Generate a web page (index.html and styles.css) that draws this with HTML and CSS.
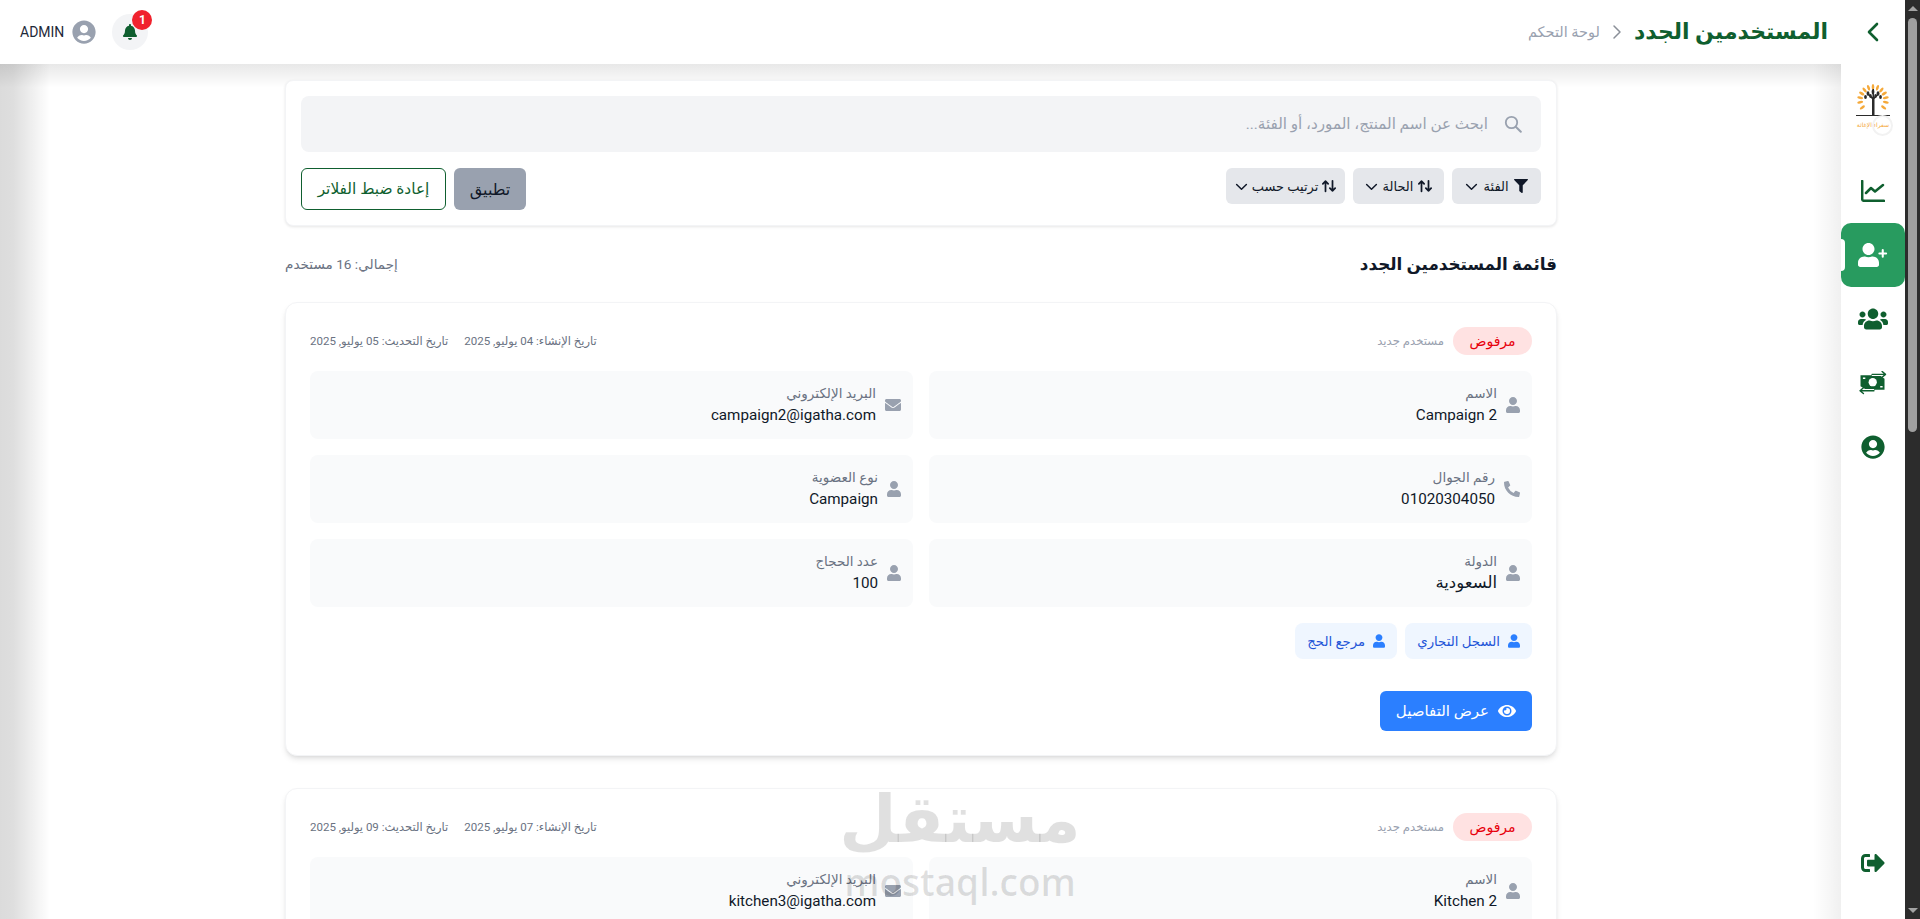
FILE: index.html
```html
<!DOCTYPE html>
<html lang="ar" dir="rtl">
<head>
  <meta charset="UTF-8">
  <meta name="viewport" content="width=device-width, initial-scale=1.0">
  <title>المستخدمين الجدد</title>
  <link rel="stylesheet" href="styles.css">
</head>
<body>
  <!-- Icon sprite -->
  <svg class="sprite" xmlns="http://www.w3.org/2000/svg">
    <symbol id="i-user" viewBox="0 0 448 512"><path d="M224 256c70.7 0 128-57.3 128-128S294.7 0 224 0 96 57.3 96 128s57.3 128 128 128zm89.6 32h-16.7c-22.2 10.2-46.9 16-72.9 16s-50.6-5.8-72.9-16h-16.7C60.2 288 0 348.2 0 422.4V464c0 26.5 21.5 48 48 48h352c26.5 0 48-21.5 48-48v-41.6c0-74.2-60.2-134.4-134.4-134.4z"/></symbol>
    <symbol id="i-phone" viewBox="0 0 512 512"><path d="M497.39 361.8l-112-48a24 24 0 0 0-28 6.9l-49.6 60.6A370.66 370.66 0 0 1 130.6 204.11l60.6-49.6a23.94 23.94 0 0 0 6.9-28l-48-112A24.16 24.16 0 0 0 122.6.61l-104 24A24 24 0 0 0 0 48c0 256.5 207.9 464 464 464a24 24 0 0 0 23.4-18.6l24-104a24.29 24.29 0 0 0-14.01-27.6z"/></symbol>
    <symbol id="i-mail" viewBox="0 0 512 512"><path d="M502.3 190.8c3.9-3.1 9.7-.2 9.7 4.7V400c0 26.5-21.5 48-48 48H48c-26.5 0-48-21.5-48-48V195.6c0-5 5.7-7.8 9.7-4.7 22.4 17.4 52.1 39.5 154.1 113.6 21.1 15.4 56.7 47.8 92.2 47.6 35.7.3 72-32.8 92.3-47.6 102-74.1 131.6-96.3 154-113.7zM256 320c23.2.4 56.6-29.2 73.4-41.4 132.7-96.3 142.8-104.7 173.4-128.7 5.8-4.5 9.2-11.5 9.2-18.9v-19c0-26.5-21.5-48-48-48H48C21.5 64 0 85.5 0 112v19c0 7.4 3.4 14.3 9.2 18.9 30.6 23.9 40.7 32.4 173.4 128.7 16.8 12.2 50.2 41.8 73.4 41.4z"/></symbol>
    <symbol id="i-filter" viewBox="0 0 512 512"><path d="M487.976 0H24.028C2.71 0-8.047 25.866 7.058 40.971L192 225.941V432c0 7.831 3.821 15.17 10.237 19.662l80 55.98C298.02 518.69 320 507.493 320 487.98V225.941l184.947-184.97C520.021 25.896 509.338 0 487.976 0z"/></symbol>
    <symbol id="i-bell" viewBox="0 0 448 512"><path d="M224 512c35.32 0 63.97-28.65 63.97-64H160.03c0 35.35 28.65 64 63.97 64zm215.39-149.71c-19.32-20.76-55.47-51.99-55.47-154.29 0-77.7-54.48-139.9-127.94-155.16V32c0-17.67-14.32-32-31.98-32s-31.98 14.33-31.98 32v20.84C118.56 68.1 64.08 130.3 64.08 208c0 102.3-36.15 133.53-55.47 154.29-6 6.45-8.66 14.16-8.61 21.71.11 16.4 12.98 32 32.1 32h383.8c19.12 0 32-15.6 32.1-32 .05-7.55-2.61-15.27-8.61-21.71z"/></symbol>
    <symbol id="i-user-circle" viewBox="0 0 496 512"><path d="M248 8C111 8 0 119 0 256s111 248 248 248 248-111 248-248S385 8 248 8zm0 96c48.6 0 88 39.4 88 88s-39.4 88-88 88-88-39.4-88-88 39.4-88 88-88zm0 344c-58.7 0-111.3-26.6-146.5-68.2 18.8-35.4 55.6-59.8 98.5-59.8 2.4 0 4.8.4 7.1 1.1 13 4.2 26.6 6.9 40.9 6.9 14.3 0 28-2.7 40.9-6.9 2.3-.7 4.7-1.1 7.1-1.1 42.9 0 79.7 24.4 98.5 59.8C359.3 421.4 306.7 448 248 448z"/></symbol>
    <symbol id="i-users" viewBox="0 0 640 512"><path d="M96 224c35.3 0 64-28.7 64-64s-28.7-64-64-64-64 28.7-64 64 28.7 64 64 64zm448 0c35.3 0 64-28.7 64-64s-28.7-64-64-64-64 28.7-64 64 28.7 64 64 64zm32 32h-64c-17.6 0-33.5 7.1-45.1 18.6 40.3 22.1 68.9 62 75.1 109.4h66c17.7 0 32-14.3 32-32v-32c0-35.3-28.7-64-64-64zm-256 0c61.9 0 112-50.1 112-112S381.9 32 320 32 208 82.1 208 144s50.1 112 112 112zm76.8 32h-8.3c-20.8 10-43.9 16-68.5 16s-47.6-6-68.5-16h-8.3C179.6 288 128 339.6 128 403.2V432c0 26.5 21.5 48 48 48h288c26.5 0 48-21.5 48-48v-28.8c0-63.6-51.6-115.2-115.2-115.2zm-223.7-13.4C161.5 263.1 145.6 256 128 256H64c-35.3 0-64 28.7-64 64v32c0 17.7 14.3 32 32 32h65.9c6.3-47.4 34.9-87.3 75.2-109.4z"/></symbol>
    <symbol id="i-signout" viewBox="0 0 512 512"><path d="M497 273L329 441c-15 15-41 4.5-41-17v-96H152c-13.3 0-24-10.7-24-24v-96c0-13.3 10.7-24 24-24h136V88c0-21.4 25.9-32 41-17l168 168c9.3 9.4 9.3 24.6 0 34zM192 436v-40c0-6.6-5.4-12-12-12H96c-17.7 0-32-14.3-32-32V160c0-17.7 14.3-32 32-32h84c6.6 0 12-5.4 12-12V76c0-6.6-5.4-12-12-12H96c-53 0-96 43-96 96v192c0 53 43 96 96 96h84c6.6 0 12-5.4 12-12z"/></symbol>
    <symbol id="i-eye" viewBox="0 0 576 512"><path d="M572.52 241.4C518.29 135.59 410.93 64 288 64S57.68 135.64 3.48 241.41a32.35 32.35 0 0 0 0 29.19C57.71 376.41 165.07 448 288 448s230.32-71.64 284.52-177.41a32.35 32.35 0 0 0 0-29.19zM288 400a144 144 0 1 1 144-144 143.93 143.93 0 0 1-144 144zm0-240a95.31 95.31 0 0 0-25.31 3.79 47.85 47.85 0 0 1-66.9 66.9A95.78 95.78 0 1 0 288 160z"/></symbol>
    <symbol id="i-sort" viewBox="0 0 16 16"><path d="M4 14V2.500M1 5.500l3-3 3 3M12 2v11.500M9 10.500l3 3 3-3" fill="none" stroke="currentColor" stroke-width="2" stroke-linecap="round" stroke-linejoin="round"/></symbol>
    <symbol id="i-down" viewBox="0 0 16 16"><path d="M2 5.500l6 6 6-6" fill="none" stroke="currentColor" stroke-width="1.800" stroke-linecap="round" stroke-linejoin="round"/></symbol>
  </svg>

  <!-- Browser scrollbar -->
  <div class="scrollbar">
    <span class="scroll-up"></span>
    <div class="scroll-track"><span class="scroll-thumb"></span></div>
    <span class="scroll-down"></span>
  </div>

  <!-- Sidebar -->
  <aside class="sidebar">
    <div class="side-top">
      <svg class="side-chevron" viewBox="0 0 14 20"><path d="M11 2L3 10l8 8" fill="none" stroke="currentColor" stroke-width="2.600" stroke-linecap="round" stroke-linejoin="round"/></svg>
    </div>
    <div class="side-logo">
      <svg class="logo-mark" viewBox="0 0 36 36">
        <g fill="#f5a93a">
          <ellipse cx="18" cy="3" rx="1.300" ry="3"/>
          <ellipse cx="18" cy="3" rx="1.300" ry="3" transform="rotate(20 18 16)"/>
          <ellipse cx="18" cy="3" rx="1.300" ry="3" transform="rotate(40 18 16)"/>
          <ellipse cx="18" cy="3" rx="1.300" ry="3" transform="rotate(60 18 16)"/>
          <ellipse cx="18" cy="3" rx="1.300" ry="3" transform="rotate(80 18 16)"/>
          <ellipse cx="18" cy="3" rx="1.300" ry="3" transform="rotate(100 18 16)"/>
          <ellipse cx="18" cy="3" rx="1.300" ry="3" transform="rotate(125 18 16)"/>
          <ellipse cx="18" cy="3" rx="1.300" ry="3" transform="rotate(-20 18 16)"/>
          <ellipse cx="18" cy="3" rx="1.300" ry="3" transform="rotate(-40 18 16)"/>
          <ellipse cx="18" cy="3" rx="1.300" ry="3" transform="rotate(-60 18 16)"/>
          <ellipse cx="18" cy="3" rx="1.300" ry="3" transform="rotate(-80 18 16)"/>
          <ellipse cx="18" cy="3" rx="1.300" ry="3" transform="rotate(-100 18 16)"/>
          <ellipse cx="18" cy="3" rx="1.300" ry="3" transform="rotate(-125 18 16)"/>
        </g>
        <g fill="#2b2b2b">
          <path d="M17 36V20l-5-5 1-1 4.500 4V10h1.500v8l4.500-4 1 1-5 5v16z" transform="translate(0 -5)"/>
          <ellipse cx="13" cy="9.500" rx="1.400" ry="2.200"/>
          <ellipse cx="18" cy="8" rx="1.400" ry="2.400"/>
          <ellipse cx="23" cy="9.500" rx="1.400" ry="2.200"/>
          <ellipse cx="10.500" cy="13" rx="1.400" ry="2"/>
          <ellipse cx="25.500" cy="13" rx="1.400" ry="2"/>
          <ellipse cx="15.500" cy="12" rx="1.300" ry="2"/>
          <ellipse cx="20.500" cy="12" rx="1.300" ry="2"/>
          <rect x="1" y="31" width="34" height="1"/>
        </g>
      </svg>
      <span class="logo-text">سفراء الإغاثة</span>
      <span class="logo-ring"></span>
    </div>
    <nav class="side-nav">
      <a class="side-item">
        <svg class="side-icon chart" viewBox="0 0 24 22"><path d="M1.200 1v18a1.800 1.800 0 0 0 1.800 1.800h20M5 13l5-5 4 3.500L22 5" fill="none" stroke="currentColor" stroke-width="2.500" stroke-linecap="round" stroke-linejoin="round"/></svg>
      </a>
      <a class="side-item active">
        <svg class="side-icon wide" viewBox="0 0 640 512">
          <path d="M224 256c70.7 0 128-57.3 128-128S294.7 0 224 0 96 57.3 96 128s57.3 128 128 128zm89.6 32h-16.7c-22.2 10.2-46.9 16-72.9 16s-50.6-5.800-72.900-16h-16.700C60.200 288 0 348.200 0 422.400V464c0 26.500 21.500 48 48 48h352c26.500 0 48-21.500 48-48v-41.600c0-74.200-60.200-134.400-134.400-134.400z"/>
          <path d="M528 150v144M456 222h144" fill="none" stroke="currentColor" stroke-width="44" stroke-linecap="round"/>
        </svg>
      </a>
      <a class="side-item">
        <svg class="side-icon wide"><use href="#i-users"/></svg>
      </a>
      <a class="side-item">
        <svg class="side-icon wide" viewBox="8 11 30 25">
          <path d="M10 15.500h20l5 3.500v11.500H16L10 27z" fill="currentColor"/>
          <circle cx="22.700" cy="22.700" r="4.300" fill="#fff"/>
          <path d="M12.500 18.500h2.500M33 27.500h-2.500" stroke="#fff" stroke-width="1.500"/>
          <path d="M22 14.500h14M24 31.500H9" fill="none" stroke="#fff" stroke-width="3.500"/>
          <path d="M22 14.500h14M32.500 11.500l3.500 3-3.500 3M24 31.500H9.500M13 28.500l-3.500 3 3.500 3" fill="none" stroke="currentColor" stroke-width="1.500" stroke-linecap="round" stroke-linejoin="round"/>
        </svg>
      </a>
      <a class="side-item">
        <svg class="side-icon"><use href="#i-user-circle"/></svg>
      </a>
    </nav>
    <a class="side-item side-bottom">
      <svg class="side-icon"><use href="#i-signout"/></svg>
    </a>
  </aside>

  <div class="main">
    <!-- Top bar -->
    <header class="topbar">
      <div class="crumbs">
        <h1>المستخدمين الجدد</h1>
        <svg class="crumb-sep" viewBox="0 0 10 16"><path d="M2 2l6 6-6 6" fill="none" stroke="currentColor" stroke-width="1.500" stroke-linecap="round" stroke-linejoin="round"/></svg>
        <span class="crumb-link">لوحة التحكم</span>
      </div>
      <div class="top-actions">
        <div class="bell">
          <svg class="bell-icon"><use href="#i-bell"/></svg>
          <span class="bell-count">1</span>
        </div>
        <svg class="avatar"><use href="#i-user-circle"/></svg>
        <span class="admin-name">ADMIN</span>
      </div>
    </header>

    <main class="content">
      <!-- Filters -->
      <section class="filter-card">
        <div class="search-box">
          <svg class="search-icon" viewBox="0 0 18 18"><circle cx="7.500" cy="7.500" r="5.700" fill="none" stroke="currentColor" stroke-width="1.800"/><path d="M12 12l4.800 4.800" stroke="currentColor" stroke-width="2" stroke-linecap="round"/></svg>
          <span class="search-placeholder">ابحث عن اسم المنتج، المورد، أو الفئة...</span>
        </div>
        <div class="filter-row">
          <div class="filter-group">
            <button class="filter-btn fb-category"><svg class="fb-icon"><use href="#i-filter"/></svg>الفئة<svg class="fb-down"><use href="#i-down"/></svg></button>
            <button class="filter-btn fb-status"><svg class="fb-icon"><use href="#i-sort"/></svg>الحالة<svg class="fb-down"><use href="#i-down"/></svg></button>
            <button class="filter-btn fb-sort"><svg class="fb-icon"><use href="#i-sort"/></svg>ترتيب حسب<svg class="fb-down"><use href="#i-down"/></svg></button>
          </div>
          <div class="filter-group">
            <button class="apply-btn">تطبيق</button>
            <button class="reset-btn">إعادة ضبط الفلاتر</button>
          </div>
        </div>
      </section>

      <div class="list-head">
        <h2>قائمة المستخدمين الجدد</h2>
        <span class="list-total">إجمالي: 16 مستخدم</span>
      </div>

      <!-- User 1 -->
      <article class="user-card">
        <div class="user-top">
          <div class="user-state">
            <span class="badge-rejected">مرفوض</span>
            <span class="user-type">مستخدم جديد</span>
          </div>
          <div class="user-dates">
            <span>تاريخ الإنشاء: 04 يوليو, 2025</span>
            <span>تاريخ التحديث: 05 يوليو, 2025</span>
          </div>
        </div>
        <div class="field-grid">
          <div class="field"><svg class="field-icon person"><use href="#i-user"/></svg><div><div class="field-label">الاسم</div><div class="field-value">Campaign 2</div></div></div>
          <div class="field"><svg class="field-icon"><use href="#i-mail"/></svg><div><div class="field-label">البريد الإلكتروني</div><div class="field-value">campaign2@igatha.com</div></div></div>
          <div class="field"><svg class="field-icon"><use href="#i-phone"/></svg><div><div class="field-label">رقم الجوال</div><div class="field-value">01020304050</div></div></div>
          <div class="field"><svg class="field-icon person"><use href="#i-user"/></svg><div><div class="field-label">نوع العضوية</div><div class="field-value">Campaign</div></div></div>
          <div class="field"><svg class="field-icon person"><use href="#i-user"/></svg><div><div class="field-label">الدولة</div><div class="field-value value-ar">السعودية</div></div></div>
          <div class="field"><svg class="field-icon person"><use href="#i-user"/></svg><div><div class="field-label">عدد الحجاج</div><div class="field-value">100</div></div></div>
        </div>
        <div class="doc-row">
          <span class="doc-chip"><svg class="chip-icon"><use href="#i-user"/></svg>السجل التجاري</span>
          <span class="doc-chip"><svg class="chip-icon"><use href="#i-user"/></svg>مرجع الحج</span>
        </div>
        <button class="details-btn"><svg class="eye-icon"><use href="#i-eye"/></svg>عرض التفاصيل</button>
      </article>

      <!-- User 2 -->
      <article class="user-card">
        <div class="user-top">
          <div class="user-state">
            <span class="badge-rejected">مرفوض</span>
            <span class="user-type">مستخدم جديد</span>
          </div>
          <div class="user-dates">
            <span>تاريخ الإنشاء: 07 يوليو, 2025</span>
            <span>تاريخ التحديث: 09 يوليو, 2025</span>
          </div>
        </div>
        <div class="field-grid">
          <div class="field"><svg class="field-icon person"><use href="#i-user"/></svg><div><div class="field-label">الاسم</div><div class="field-value">Kitchen 2</div></div></div>
          <div class="field"><svg class="field-icon"><use href="#i-mail"/></svg><div><div class="field-label">البريد الإلكتروني</div><div class="field-value">kitchen3@igatha.com</div></div></div>
        </div>
      </article>
    </main>
  </div>

  <!-- Site watermark baked into the screenshot -->
  <div class="watermark">
    <span class="wm-ar">مستقل</span>
    <span class="wm-en">mostaql.com</span>
  </div>
</body>
</html>
```

FILE: styles.css
```css
* {
  margin: 0;
  padding: 0;
  box-sizing: border-box;
}

html, body {
  height: 100%;
  overflow: hidden;
}

body {
  display: flex;
  font-family: Roboto, "DejaVu Sans", sans-serif;
  color: #101828;
  background: #fff;
}

svg {
  display: block;
  fill: currentColor;
  flex-shrink: 0;
}

button {
  font: inherit;
  border: none;
  cursor: pointer;
}

.sprite {
  display: none;
}

/* Scrollbar */
.scrollbar {
  width: 15px;
  flex-shrink: 0;
  display: flex;
  flex-direction: column;
  align-items: center;
  background: #2c2c2c;
}

.scroll-up,
.scroll-down {
  width: 0;
  height: 0;
  border-left: 5px solid transparent;
  border-right: 5px solid transparent;
}

.scroll-up {
  margin: 6px 0 2px;
  border-bottom: 5px solid #a3a3a3;
}

.scroll-down {
  margin: 2px 0 6px;
  border-top: 5px solid #a3a3a3;
}

.scroll-track {
  flex: 1;
  width: 100%;
  padding: 5px 3px 0;
}

.scroll-thumb {
  display: block;
  height: 414px;
  background: #9f9f9f;
  border-radius: 5px;
}

/* Sidebar */
.sidebar {
  width: 64px;
  flex-shrink: 0;
  display: flex;
  flex-direction: column;
  background: #fff;
  color: #0f5f2f;
}

.side-top {
  height: 64px;
  display: flex;
  align-items: center;
  justify-content: center;
}

.side-chevron {
  width: 14px;
  height: 20px;
}

.side-logo {
  position: relative;
  height: 95px;
  padding-top: 20px;
  display: flex;
  flex-direction: column;
  align-items: center;
}

.logo-mark {
  width: 36px;
  height: 36px;
}

.logo-text {
  font-size: 6px;
  line-height: 9px;
  color: #f5a93a;
  white-space: nowrap;
}

.logo-ring {
  position: absolute;
  top: 51px;
  left: 31px;
  width: 21px;
  height: 21px;
  border: 2px solid #f2f2f2;
  border-radius: 50%;
}

.side-nav {
  flex: 1;
}

.side-item {
  position: relative;
  display: flex;
  align-items: center;
  justify-content: center;
  height: 64px;
}

.side-item.active {
  background: #289b5f;
  color: #fff;
  border-radius: 10px;
}

.side-item.active::before {
  content: "";
  position: absolute;
  left: 0;
  top: 16px;
  width: 4px;
  height: 32px;
  background: #fff;
  border-radius: 0 6px 6px 0;
}

.side-bottom {
  height: 56px;
  margin-bottom: 28px;
}

.side-icon {
  width: 24px;
  height: 24px;
}

.side-icon.wide {
  width: 30px;
}

.side-icon.chart {
  height: 22px;
}

/* Top bar */
.main {
  flex: 1;
  min-width: 0;
  display: flex;
  flex-direction: column;
}

.topbar {
  height: 64px;
  flex-shrink: 0;
  display: flex;
  align-items: center;
  justify-content: space-between;
  padding: 0 13px 0 20px;
  background: #fff;
}

.crumbs {
  display: flex;
  align-items: center;
  gap: 12px;
}

.crumbs h1 {
  font-size: 22px;
  line-height: 32px;
  font-weight: 600;
  color: #0f5f2f;
}

.crumb-sep {
  width: 10px;
  height: 16px;
  color: #8a8f98;
}

.crumb-link {
  font-size: 14.500px;
  color: #99a1af;
}

.top-actions {
  display: flex;
  align-items: center;
}

.bell {
  position: relative;
  width: 36px;
  height: 36px;
  margin-left: 16px;
  display: flex;
  align-items: center;
  justify-content: center;
  background: #f3f4f6;
  border-radius: 50%;
  color: #0f5f2f;
}

.bell-icon {
  width: 14px;
  height: 16px;
}

.bell-count {
  position: absolute;
  top: -4px;
  right: -4px;
  width: 20px;
  height: 20px;
  display: flex;
  align-items: center;
  justify-content: center;
  background: #f0222d;
  border-radius: 50%;
  color: #fff;
  font-size: 12px;
  font-weight: 700;
}

.avatar {
  width: 24px;
  height: 24px;
  margin-left: 8px;
  color: #99a1af;
}

.admin-name {
  font-size: 14px;
  color: #1e2939;
}

/* Content */
.content {
  flex: 1;
  min-height: 0;
  overflow: hidden;
  padding: 16px 284px 0 285px;
  background:
    linear-gradient(to right, rgba(0, 0, 0, 0.14), rgba(0, 0, 0, 0.13) 13px, transparent 50px),
    linear-gradient(to left, rgba(0, 0, 0, 0.06), transparent 28px),
    linear-gradient(to bottom, rgba(0, 0, 0, 0.09), transparent 24px);
}

.filter-card {
  background: #fff;
  border: 1px solid #f3f4f6;
  border-radius: 8px;
  padding: 15px;
  box-shadow: 0 1px 3px rgba(0, 0, 0, 0.1);
}

.search-box {
  height: 56px;
  display: flex;
  align-items: center;
  gap: 16px;
  padding: 0 19px;
  background: #f3f4f6;
  border-radius: 8px;
}

.search-icon {
  width: 18px;
  height: 18px;
  color: #99a1af;
}

.search-placeholder {
  font-size: 15.200px;
  color: #99a1af;
}

.filter-row {
  display: flex;
  justify-content: space-between;
  align-items: flex-start;
  margin-top: 16px;
}

.filter-group {
  display: flex;
  gap: 8px;
}

.filter-btn {
  height: 36px;
  display: flex;
  align-items: center;
  justify-content: center;
  gap: 5px;
  background: #e5e7eb;
  border-radius: 6px;
  font-size: 13px;
  color: #101828;
}

.fb-category {
  width: 89px;
}

.fb-status {
  width: 91px;
}

.fb-sort {
  width: 119px;
  gap: 4px;
}

.fb-icon {
  width: 14px;
  height: 14px;
}

.fb-down {
  width: 13px;
  height: 13px;
}

.apply-btn {
  width: 72px;
  height: 42px;
  background: #99a1af;
  border-radius: 6px;
  font-size: 16px;
  color: #101828;
}

.reset-btn {
  width: 145px;
  height: 42px;
  background: #fff;
  border: 1px solid #0f5f2f;
  border-radius: 6px;
  font-size: 15.400px;
  color: #0f5f2f;
}

.list-head {
  height: 28px;
  margin: 24px 0;
  display: flex;
  align-items: center;
  justify-content: space-between;
}

.list-head h2 {
  font-size: 16.800px;
  font-weight: 700;
  color: #101828;
}

.list-total {
  font-size: 13.600px;
  color: #6a7282;
}

.user-card {
  background: #fff;
  border: 1px solid #f3f4f6;
  border-radius: 12px;
  padding: 24px;
  margin-bottom: 32px;
  box-shadow: 0 4px 6px -1px rgba(0, 0, 0, 0.1), 0 2px 4px -2px rgba(0, 0, 0, 0.1);
}

.user-top {
  display: flex;
  justify-content: space-between;
  align-items: center;
  margin-bottom: 16px;
}

.user-state {
  display: flex;
  align-items: center;
  gap: 9px;
}

.badge-rejected {
  width: 79px;
  height: 28px;
  display: flex;
  align-items: center;
  justify-content: center;
  background: #ffe2e2;
  border-radius: 14px;
  font-size: 14px;
  color: #e7000b;
}

.user-type {
  font-size: 11.700px;
  color: #99a1af;
}

.user-dates {
  display: flex;
  gap: 16px;
  font-size: 11.500px;
  color: #6a7282;
}

.field-grid {
  display: grid;
  grid-template-columns: 1fr 1fr;
  gap: 16px;
}

.field {
  height: 68px;
  display: flex;
  align-items: center;
  gap: 9px;
  padding: 0 12px;
  background: #f9fafb;
  border-radius: 8px;
}

.field-icon {
  width: 16px;
  height: 16px;
  color: #99a1af;
}

.field-icon.person {
  width: 14px;
}

.field-label {
  font-size: 13.500px;
  line-height: 20px;
  color: #6a7282;
}

.field-value {
  font-size: 15.200px;
  line-height: 24px;
  color: #101828;
}

.value-ar {
  font-size: 16.500px;
}

.doc-row {
  display: flex;
  gap: 8px;
  margin-top: 16px;
}

.doc-chip {
  height: 36px;
  display: flex;
  align-items: center;
  gap: 8px;
  padding: 0 12px;
  background: #eff6ff;
  border-radius: 8px;
  font-size: 13.300px;
  color: #1e55d8;
}

.chip-icon {
  width: 12px;
  height: 14px;
  color: #2b7fff;
}

.details-btn {
  height: 40px;
  display: flex;
  align-items: center;
  gap: 9px;
  margin-top: 32px;
  padding: 0 16px;
  background: #2b7fff;
  border-radius: 6px;
  font-size: 15px;
  color: #fff;
}

.eye-icon {
  width: 18px;
  height: 16px;
}

/* Watermark */
.watermark {
  position: absolute;
  left: 845px;
  top: 778px;
  width: 230px;
  display: flex;
  flex-direction: column;
  align-items: center;
  color: rgba(0, 0, 0, 0.12);
  pointer-events: none;
}

.wm-ar {
  font-family: "DejaVu Sans", sans-serif;
  font-size: 66px;
  line-height: 84px;
  font-weight: 700;
}

.wm-en {
  font-family: "Open Sans", sans-serif;
  font-size: 37px;
  line-height: 40px;
  font-weight: 600;
}
```
